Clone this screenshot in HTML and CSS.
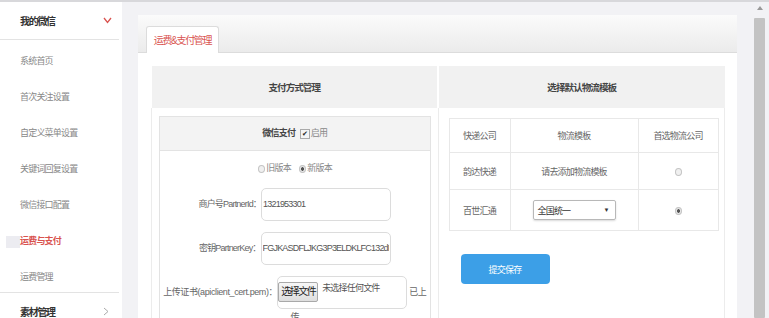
FILE: index.html
```html
<!DOCTYPE html>
<html lang="zh-CN">
<head>
    <meta charset="UTF-8">
    <meta name="viewport" content="width=device-width, initial-scale=1.0">
    <title>运费&amp;支付管理</title>
    <link rel="stylesheet" href="styles.css">
</head>
<body>

<div class="layout">
    <aside class="sidebar">
        <div class="menu-title">
            <span>我的微信</span>
            <svg class="chevron" width="9" height="7" viewBox="0 0 9 7"><polyline points="1,1 4.5,5.5 8,1" fill="none" stroke="#d9534f" stroke-width="1.3"/></svg>
        </div>
        <ul class="menu">
            <li>系统首页</li>
            <li>首次关注设置</li>
            <li>自定义菜单设置</li>
            <li>关键词回复设置</li>
            <li>微信接口配置</li>
            <li class="active">运费与支付</li>
            <li>运费管理</li>
        </ul>
        <div class="menu-title menu-title-bottom">
            <span>素材管理</span>
            <svg class="chevron" width="6" height="9" viewBox="0 0 6 9"><polyline points="1,1 5,4.5 1,8" fill="none" stroke="#aaa" stroke-width="1"/></svg>
        </div>
    </aside>

    <main class="main">
        <div class="panel">
            <div class="panel-tabs">
                <span class="tab">运费&amp;支付管理</span>
            </div>
            <div class="panel-body">
                <table class="grid">
                    <tr>
                        <th>支付方式管理</th>
                        <th>选择默认物流模板</th>
                    </tr>
                    <tr>
                        <td class="pay-cell">
                            <div class="pay-box">
                                <div class="pay-head">
                                    <b>微信支付</b>
                                    <span class="checkbox">✔</span>启用
                                </div>
                                <div class="version">
                                    <span class="radio"></span> 旧版本
                                    <span class="radio checked"></span> 新版本
                                </div>
                                <div class="form-row">
                                    商户号PartnerId：<input class="field" type="text" value="1321953301">
                                </div>
                                <div class="form-row">
                                    密钥PartnerKey：<input class="field" type="text" value="FGJKASDFLJKG3P3ELDKLFC132dFGK">
                                </div>
                                <div class="form-row file-row">
                                    <span>上传证书(apiclient_cert.pem)：</span><span class="file-box"><span class="file-btn">选择文件</span><span class="file-name">未选择任何文件</span></span><span>已上传</span>
                                </div>
                            </div>
                        </td>
                        <td class="ship-cell">
                            <table class="ship">
                                <tr>
                                    <td class="c1">快递公司</td>
                                    <td class="c2">物流模板</td>
                                    <td class="c3">首选物流公司</td>
                                </tr>
                                <tr class="row-2">
                                    <td>韵达快递</td>
                                    <td>请去添加物流模板</td>
                                    <td><span class="radio"></span></td>
                                </tr>
                                <tr class="row-3">
                                    <td>百世汇通</td>
                                    <td><span class="select"><span>全国统一</span><span class="arrow">▼</span></span></td>
                                    <td><span class="radio checked"></span></td>
                                </tr>
                            </table>
                            <button class="btn-save" type="button">提交保存</button>
                        </td>
                    </tr>
                </table>
            </div>
        </div>
    </main>

    <div class="scrollbar">
        <span class="scroll-up"></span>
        <span class="scroll-thumb"></span>
    </div>
</div>

</body>
</html>
```

FILE: styles.css
```css
html, body {
    height: 100%;
}
body {
    margin: 0;
    box-sizing: border-box;
    background: #f2f2f5;
    border-top: 2px solid #d8d8db;
    font-family: 'Liberation Sans', 'Noto Sans CJK SC', sans-serif;
    font-size: 9px;
    letter-spacing: -0.8px;
    color: #666;
    overflow: hidden;
}
.layout {
    display: flex;
    height: 100%;
}

/* sidebar */
.sidebar {
    width: 122px;
    flex-shrink: 0;
    background: #fff;
}
.menu-title {
    width: 119px;
    height: 38px;
    box-sizing: border-box;
    padding: 0 7px 0 20px;
    display: flex;
    justify-content: space-between;
    align-items: center;
    border-bottom: 1px solid #e3e3e3;
    font-size: 10px;
    letter-spacing: -1.3px;
    font-weight: bold;
    color: #333;
}
.menu-title-bottom {
    border-bottom: none;
    border-top: 1px solid #e3e3e3;
}
.menu-title-bottom .chevron {
    margin-right: 3px;
}
.menu {
    list-style: none;
    margin: 0;
    padding: 0;
}
.menu li {
    height: 30px;
    line-height: 30px;
    padding: 6px 0 0 20px;
    color: #888;
}
.menu li.active {
    padding-left: 6px;
    color: #d9534f;
    font-weight: bold;
}
.menu li.active::before {
    content: '';
    display: inline-block;
    width: 14px;
    height: 12px;
    background: #ececf1;
    vertical-align: middle;
}

/* main panel */
.main {
    flex: 1;
    padding: 13px 17px 0 16px;
}
.panel {
    background: #fff;
    height: 100%;
}
.panel-tabs {
    height: 38px;
    box-sizing: border-box;
    padding-left: 8px;
    display: flex;
    align-items: flex-end;
    background: linear-gradient(#fbfbfb, #ebebeb);
    border-bottom: 1px solid #dcdcdc;
}
.tab {
    width: 73px;
    height: 27px;
    box-sizing: border-box;
    margin-bottom: -1px;
    border: 1px solid #dcdcdc;
    border-bottom: none;
    border-radius: 3px 3px 0 0;
    background: #fff;
    color: #d9534f;
    text-align: center;
    line-height: 27px;
    font-size: 10px;
    letter-spacing: -1.3px;
}
.panel-body {
    padding: 13px 12px 0 13px;
}
.grid {
    width: 100%;
    border-collapse: collapse;
    table-layout: fixed;
}
.grid th {
    height: 40px;
    background: #f1f1f1;
    font-size: 9.5px;
    letter-spacing: -0.9px;
    color: #444;
}
.grid th + th {
    border-left: 2px solid #fff;
}
.grid > tbody > tr > td {
    vertical-align: top;
    border-left: 1px solid #ececec;
    border-right: 1px solid #ececec;
}
.pay-cell {
    padding: 8px 7px 0 7px;
}
.ship-cell {
    padding: 10px 11px 0 10px;
    height: 220px;
}

/* payment box */
.pay-box {
    border: 1px solid #e3e3e3;
    height: 260px;
}
.pay-head {
    height: 33px;
    line-height: 33px;
    background: #f3f3f3;
    border-bottom: 1px solid #e3e3e3;
    text-align: center;
    color: #888;
}
.pay-head b {
    color: #444;
    margin-right: 3px;
}
.checkbox {
    display: inline-block;
    width: 8px;
    height: 8px;
    line-height: 8px;
    border: 1px solid #aaa;
    background: #f4f4f4;
    font-size: 7px;
    letter-spacing: 0;
    color: #222;
    text-align: center;
    vertical-align: middle;
    margin-right: 1px;
}
.version {
    margin-top: 6px;
    height: 22px;
    line-height: 22px;
    text-align: center;
    color: #888;
}
.version .radio + .radio {
    margin-left: 6px;
}
.radio {
    display: inline-block;
    width: 5px;
    height: 6px;
    border: 1px solid #c4c4c4;
    border-radius: 50%;
    background: #f0f0f0;
    vertical-align: middle;
}
.radio.checked {
    background: radial-gradient(#555 35%, #e6e6e6 50%);
}
.form-row {
    margin-top: 11px;
    padding: 0 4px;
    text-align: center;
    line-height: 33px;
    color: #666;
}
.version + .form-row {
    margin-top: 9px;
}
.file-row {
    padding: 0 1px;
    line-height: 16px;
    letter-spacing: -0.4px;
}
.field {
    width: 130px;
    height: 33px;
    box-sizing: border-box;
    padding: 0 1px;
    border: 1px solid #dcdcdc;
    border-radius: 5px;
    font: inherit;
    letter-spacing: -0.8px;
    color: #555;
    vertical-align: middle;
}
.file-box {
    display: inline-flex;
    align-items: flex-start;
    gap: 4px;
    width: 130px;
    height: 33px;
    box-sizing: border-box;
    padding: 5px 0 0 0;
    border: 1px solid #dcdcdc;
    border-radius: 5px;
    letter-spacing: -0.8px;
    vertical-align: middle;
    margin-right: 2px;
}
.file-btn {
    flex-shrink: 0;
    width: 40px;
    height: 20px;
    box-sizing: border-box;
    line-height: 18px;
    border: 1px solid #a9a9a9;
    border-radius: 2px;
    background: linear-gradient(#f7f7f7, #dedede);
    text-align: center;
    font-size: 10px;
    letter-spacing: -1.5px;
    color: #222;
}
.file-name {
    line-height: 12px;
    color: #555;
    white-space: nowrap;
}

/* shipping table */
.ship {
    width: 266px;
    border-collapse: collapse;
    table-layout: fixed;
}
.ship td {
    border: 1px solid #e8e8e8;
    text-align: center;
    height: 33px;
    padding: 0;
    color: #666;
}
.ship .c1 { width: 60px; }
.ship .c2 { width: 127px; }
.ship .c3 { width: 79px; }
.ship .row-2 td { height: 36px; }
.ship .row-3 td { height: 40px; }
.select {
    display: inline-flex;
    justify-content: space-between;
    align-items: center;
    width: 83px;
    height: 20px;
    box-sizing: border-box;
    padding: 0 5px 0 4px;
    border: 1px solid #b8b8b8;
    border-radius: 2px;
    box-shadow: 0 1px 2px rgba(0, 0, 0, 0.15);
    color: #333;
    vertical-align: middle;
}
.select .arrow {
    font-size: 6px;
    letter-spacing: 0;
}
.btn-save {
    display: block;
    width: 89px;
    height: 30px;
    margin: 23px 0 0 12px;
    border: none;
    border-radius: 4px;
    background: #3c9fe7;
    color: #fff;
    font: inherit;
    letter-spacing: -0.8px;
}

/* scrollbar strip */
.scrollbar {
    width: 15px;
    flex-shrink: 0;
    display: flex;
    flex-direction: column;
}
.scroll-up {
    width: 0;
    margin: 4px 0 0 3px;
    border-left: 3px solid transparent;
    border-right: 3px solid transparent;
    border-bottom: 4px solid #999;
}
.scroll-thumb {
    flex: 1;
    width: 11px;
    margin-top: 8px;
    background: #c3c3c3;
    border-radius: 1px;
}
```
